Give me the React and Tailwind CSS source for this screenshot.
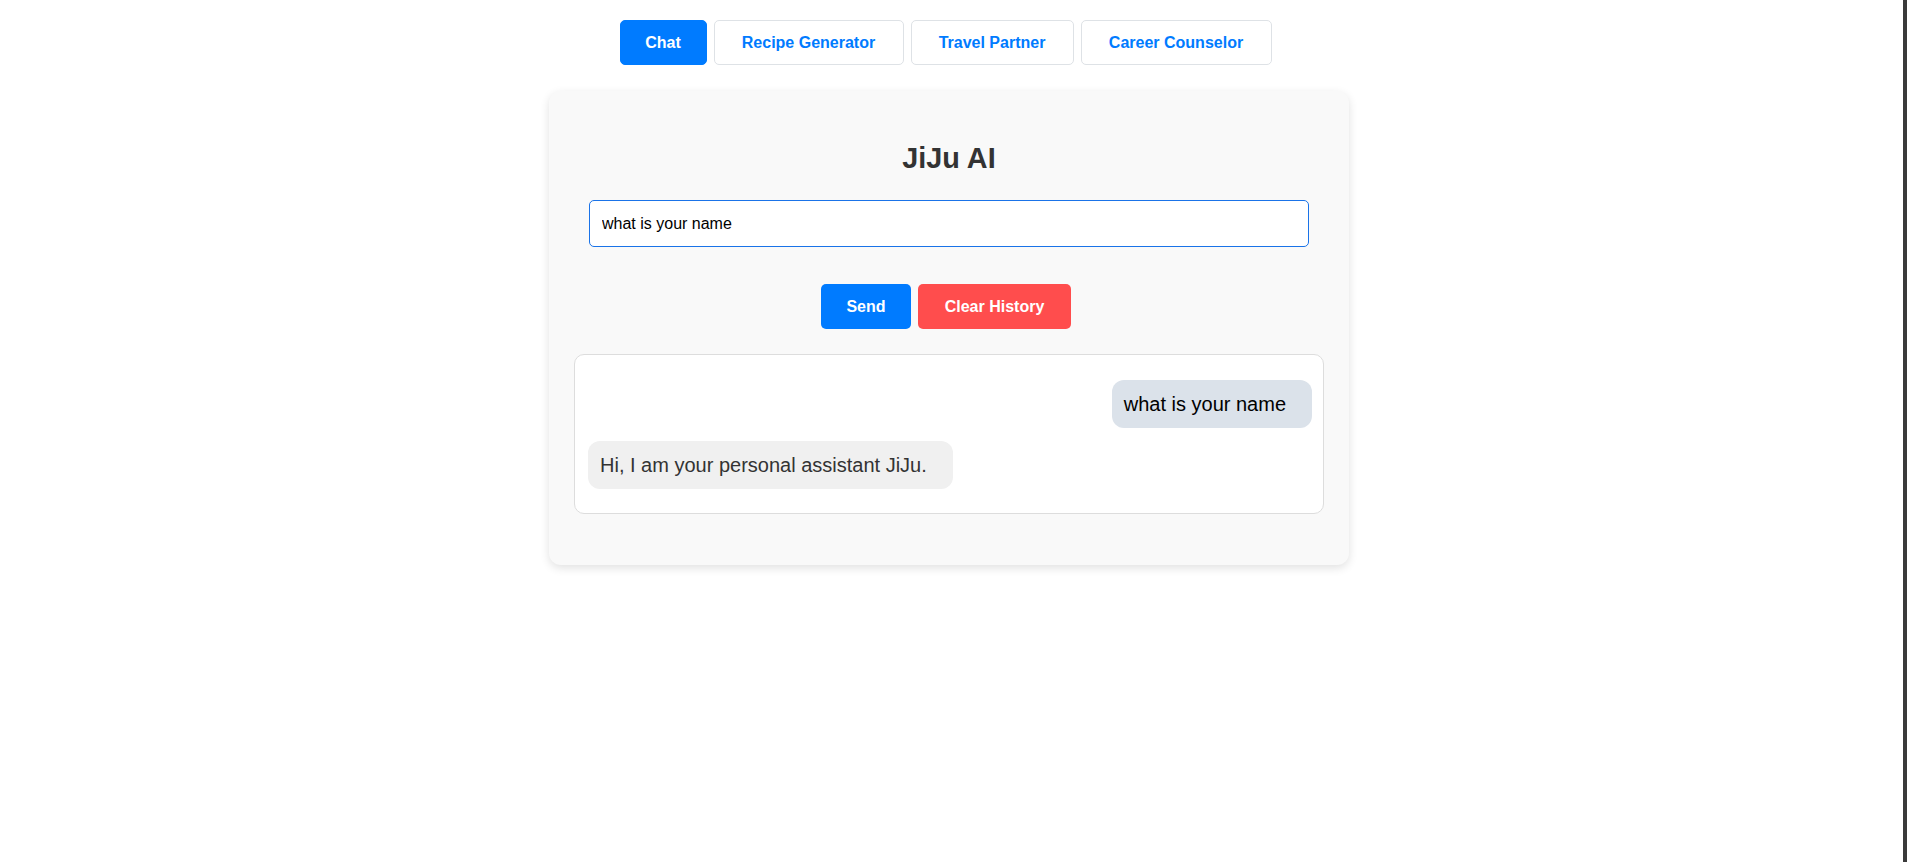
import React, { useState } from 'react';

const tabs = [
    { name: 'Chat', w: 'w-[87px]' },
    { name: 'Recipe Generator', w: 'w-[190px]' },
    { name: 'Travel Partner', w: 'w-[163px]' },
    { name: 'Career Counselor', w: 'w-[191px]' },
];

const Bubble = ({ from, children }) => (
    <div className={from === 'user' ? 'flex justify-end' : 'flex justify-start'}>
        <div
            className={
                'rounded-[12px] py-3 pl-3 pr-[26px] text-[20px] leading-[24px] ' +
                (from === 'user' ? 'bg-[#dbe2ea] text-black' : 'bg-[#f0f0f0] text-[#333]')
            }
        >
            {children}
        </div>
    </div>
);

const App = () => {
    const [active, setActive] = useState('Chat');
    const [input, setInput] = useState('what is your name');
    const [messages] = useState([
        { from: 'user', text: 'what is your name' },
        { from: 'bot', text: 'Hi, I am your personal assistant JiJu.' },
    ]);

    return (
        <div className="flex min-h-[862px] bg-white font-['Liberation_Sans',Arial,sans-serif]">
            <main className="flex-1 mr-[5px]">
                {/* tab bar */}
                <div className="flex justify-center gap-[7px] pt-5 pr-[7px]">
                    {tabs.map((t) =>
                        <button
                            key={t.name}
                            onClick={() => setActive(t.name)}
                            className={
                                t.w + ' h-[45px] rounded-[5px] border text-[16px] font-bold ' +
                                (active === t.name
                                    ? 'bg-[#007bff] border-[#007bff] text-white'
                                    : 'bg-white border-[#dee2e6] text-[#007bff]')
                            }
                        >
                            {t.name}
                        </button>
                    )}
                </div>

                {/* chat card */}
                <div className="mx-auto mt-[26px] w-[800px] rounded-[12px] bg-[#f9f9f9] px-10 pt-[51px] pb-[51px] shadow-[0_3px_10px_rgba(0,0,0,0.12)]">
                    <h1 className="text-center text-[28.8px] leading-[32px] font-bold text-[#333]">JiJu AI</h1>

                    <input
                        value={input}
                        onChange={(e) => setInput(e.target.value)}
                        className="mt-[26px] block h-[47px] w-full rounded-[5px] border border-[#1a73e8] bg-white px-3 text-[16px] text-black outline-none"
                    />

                    <div className="mt-[37px] flex justify-center gap-[7px] pr-[6px]">
                        <button className="h-[45px] w-[90px] rounded-[5px] bg-[#007bff] text-[16px] font-bold text-white">Send</button>
                        <button className="h-[45px] w-[153px] rounded-[5px] bg-[#ff4d4d] text-[16px] font-bold text-white">Clear History</button>
                    </div>

                    <div className="-mx-[15px] mt-[25px] flex flex-col gap-[13px] rounded-[10px] border border-[#dddddd] bg-white pt-[25px] pb-[24px] pl-[13px] pr-[11px]">
                        {messages.map((m, i) => (
                            <Bubble key={i} from={m.from}>{m.text}</Bubble>
                        ))}
                    </div>
                </div>
            </main>
            <div className="w-[4px] bg-[#3a3a3a]" />
        </div>
    );
};

export default App;
